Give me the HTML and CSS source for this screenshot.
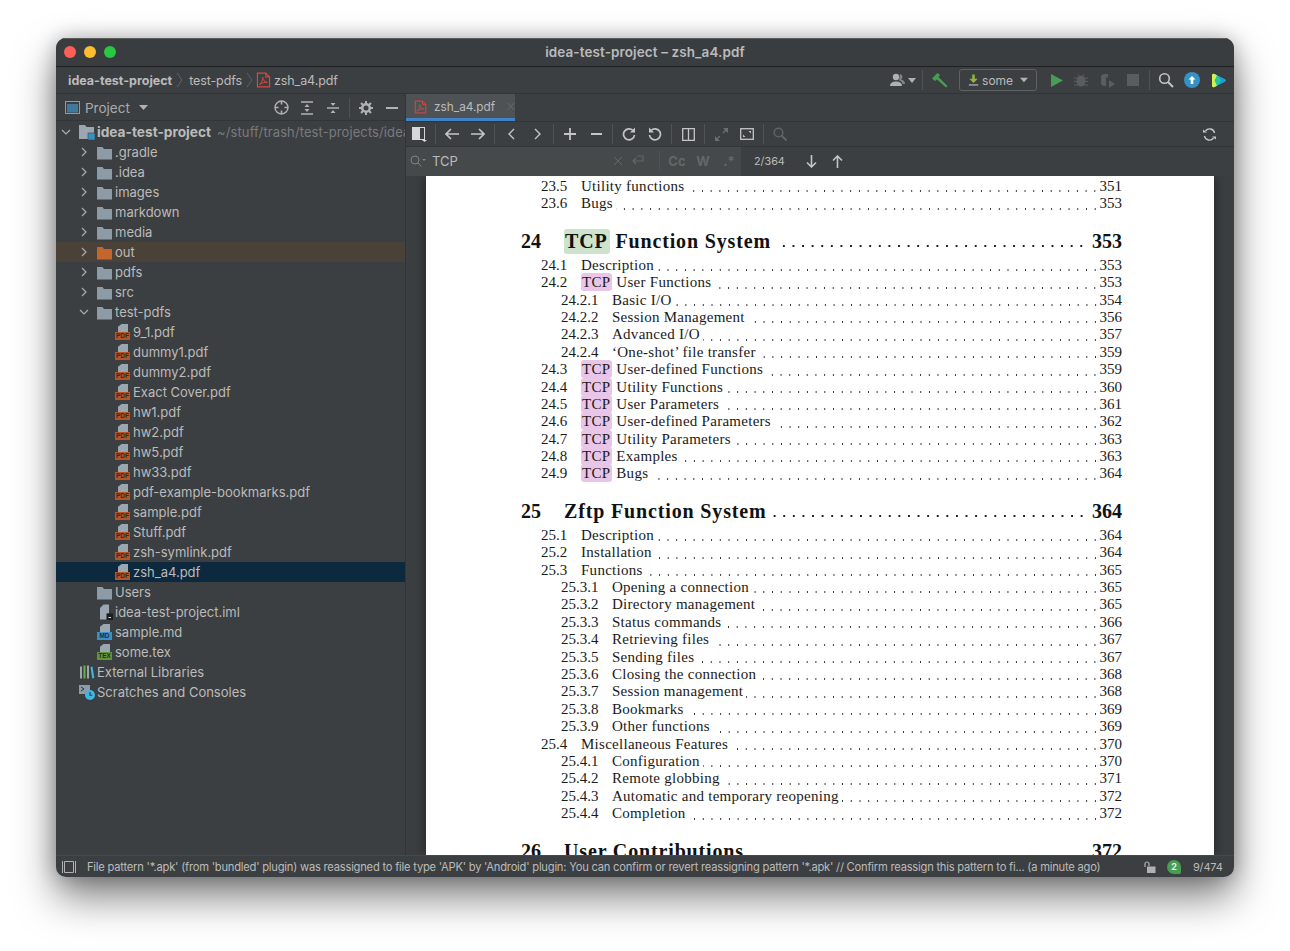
FILE: index.html
```html
<!DOCTYPE html>
<html lang="en">
<head>
<meta charset="utf-8">
<title>idea-test-project – zsh_a4.pdf</title>
<link rel="stylesheet" href="styles.css">
</head>
<body>
<svg class="defs" width="0" height="0" aria-hidden="true">
  <symbol id="folder" viewBox="0 0 15 15"><path d="M0 2h5.500L7 4h8v10.500H0z" fill="#8c9ba6"/></symbol>
  <symbol id="folder-out" viewBox="0 0 15 15"><path d="M0 2h5.500L7 4h8v10.500H0z" fill="#c2662e"/></symbol>
  <symbol id="arrow-r" viewBox="0 0 10 10"><path d="M3 1l4 4-4 4" fill="none" stroke="#a9adb0" stroke-width="1.2"/></symbol>
  <symbol id="arrow-d" viewBox="0 0 10 10"><path d="M1 3l4 4 4-4" fill="none" stroke="#a9adb0" stroke-width="1.2"/></symbol>
  <symbol id="pdf-red" viewBox="0 0 16 16"><path d="M1.5.7h9l4 4v10.600h-13zM10.500.7v4h4" fill="none" stroke="#d9493f" stroke-width="1.2"/><path d="M3.500 13c2-1 4-5 3.500-8 .3 3 2 5 5 5.500-3-.3-6 .5-8.500 2.500z" fill="none" stroke="#d9493f" stroke-width="1"/></symbol>
  <symbol id="file-iml" viewBox="0 0 16 16"><path d="M6.500.5H12v9h-2v6H3V4z" fill="#9aa7b0"/><rect x="9.500" y="9.500" width="6.500" height="6.500" fill="#1e1e1e"/><rect x="11.500" y="13" width="2.500" height="1" fill="#ddd"/></symbol>
  <symbol id="libs" viewBox="0 0 16 16"><rect x="1" y="2.500" width="2" height="12" fill="#9aa7b0"/><rect x="4.500" y="1.500" width="2" height="13" fill="#62b543"/><rect x="8" y="1.500" width="2" height="13" fill="#9aa7b0"/><path d="M11.500 3l2-.5 1.800 11.500-2 .5z" fill="#40b6e0"/></symbol>
  <symbol id="scratch" viewBox="0 0 16 16"><rect x="0" y="1" width="11" height="9" fill="#8c9ba6"/><path d="M2 3l3 2-3 2" fill="none" stroke="#333" stroke-width="1"/><circle cx="11" cy="11" r="5" fill="#40b6e0"/><path d="M11 8v3.300h2.300" fill="none" stroke="#2a3a44" stroke-width="1.100"/></symbol>
  <symbol id="module" viewBox="0 0 16 16"><path d="M0 1h6l1.500 2H15v12H0z" fill="#9aa7b0"/><rect x="9" y="9" width="7" height="7" fill="#3592c4" stroke="#3c3f41" stroke-width=".6"/></symbol>
</svg>

<div class="window">
  <header class="titlebar">
    <div class="lights"><i class="light red"></i><i class="light yellow"></i><i class="light green"></i></div>
    <span class="title">idea-test-project – zsh_a4.pdf</span>
  </header>

  <nav class="navbar">
    <span class="crumb strong">idea-test-project</span>
    <svg class="chev" width="7" height="18" viewBox="0 0 7 18"><path d="M1 2l5 7-5 7" fill="none" stroke="#5f6366"/></svg>
    <span class="crumb">test-pdfs</span>
    <svg class="chev" width="7" height="18" viewBox="0 0 7 18"><path d="M1 2l5 7-5 7" fill="none" stroke="#5f6366"/></svg>
    <svg class="crumb-icon" width="15" height="16"><use href="#pdf-red"/></svg>
    <span class="crumb">zsh_a4.pdf</span>

    <div class="nav-tools">
      <span class="btn person">
        <svg width="16" height="14" viewBox="0 0 16 14"><circle cx="6" cy="4" r="3.200" fill="#afb1b3"/><path d="M0 13c0-3 2-4.500 6-4.500s6 1.500 6 4.500z" fill="#afb1b3"/><path d="M10 1a3 3 0 0 1 1 5.500c2.500.5 4 2 4 4.500h-2.500C12 9 11 8 9 7.500z" fill="#7f8386"/></svg>
        <svg width="8" height="5" viewBox="0 0 8 5"><path d="M0 0h8L4 5z" fill="#afb1b3"/></svg>
      </span>
      <i class="sep"></i>
      <span class="btn hammer">
        <svg width="16" height="15" viewBox="0 0 16 15"><path d="M0 5.500L5.500 0l2.500 2-1.500 2L15.500 13 14 14.500 5 6.500 3 8z" fill="#499c54"/></svg>
      </span>
      <span class="run-config">
        <svg width="14" height="15" viewBox="0 0 13 14"><path d="M5 0h3v5h3.500L6.500 10 1.500 5H5z" fill="#8fb83a"/><rect x="1" y="11.500" width="11" height="1.500" fill="#afb1b3"/></svg>
        <span>some</span>
        <svg width="10" height="6" viewBox="0 0 9 5"><path d="M0 0h9L4.500 5z" fill="#afb1b3"/></svg>
      </span>
      <span class="btn play"><svg width="12" height="13" viewBox="0 0 12 13"><path d="M0 0l12 6.500L0 13z" fill="#499c54"/></svg></span>
      <span class="btn"><svg width="14" height="14" viewBox="0 0 14 14"><ellipse cx="7" cy="8" rx="4.500" ry="5.500" fill="#5a5d5f"/><path d="M0 5h14M0 8.500h14M0 12h14M3.500 1l2 2M10.500 1l-2 2" stroke="#5a5d5f"/></svg></span>
      <span class="btn"><svg width="15" height="15" viewBox="0 0 15 15"><path d="M7 1H4a3.500 3.500 0 0 0-3 3.500v5A3.500 3.500 0 0 0 4 13h2V4.500h2V1z" fill="#5a5d5f"/><path d="M9 7l6 4-6 4z" fill="#5a5d5f"/></svg></span>
      <span class="btn"><svg width="12" height="12"><rect width="12" height="12" fill="#5a5d5f"/></svg></span>
      <i class="sep"></i>
      <span class="btn"><svg width="16" height="16" viewBox="0 0 16 16"><circle cx="6.500" cy="6.500" r="4.800" fill="none" stroke="#c3c5c7" stroke-width="1.600"/><path d="M10 10l5 5" stroke="#c3c5c7" stroke-width="2"/></svg></span>
      <span class="btn"><svg width="16" height="16" viewBox="0 0 16 16"><circle cx="8" cy="8" r="8" fill="#3592c4"/><path d="M8 4l3.500 3.500H9.300V12H6.700V7.500H4.500z" fill="#fff"/></svg></span>
      <span class="btn"><svg width="15" height="15" viewBox="0 0 15 15"><path d="M1 2.500Q1 0 3.500 1L14 6.500q1.200 1 0 2L3.500 14Q1 15 1 12.500z" fill="#1fc8a0"/><path d="M1 2.500Q1 0 3.500 1L6 2.300 3.500 7.500 6 12.700 3.500 14Q1 15 1 12.500z" fill="#d8ee55"/><path d="M7 3l7 3.500q1.200 1 0 2L7 12 10 7.500z" fill="#1a9ee8"/></svg></span>
    </div>
  </nav>

  <div class="workspace">
    <aside class="sidebar">
      <div class="panel-head">
        <svg class="project-icon" width="15" height="13" viewBox="0 0 15 13"><rect x=".5" y=".5" width="14" height="12" fill="none" stroke="#8c9ba6"/><rect x="2" y="3" width="11" height="8.500" fill="#3d7a9e"/></svg>
        <span class="panel-title">Project</span>
        <svg class="caret" width="9" height="5" viewBox="0 0 9 5"><path d="M0 0h9L4.500 5z" fill="#afb1b3"/></svg>
        <div class="panel-tools">
          <span class="btn"><svg width="15" height="15" viewBox="0 0 15 15"><circle cx="7.500" cy="7.500" r="6.500" fill="none" stroke="#afb1b3" stroke-width="1.400"/><path d="M7.500 1v3.500M7.500 10.500V14M1 7.500h3.500M10.500 7.500H14" stroke="#afb1b3" stroke-width="1.600"/></svg></span>
          <span class="btn"><svg width="14" height="14" viewBox="0 0 14 14"><path d="M1 1h12M1 13h12" stroke="#afb1b3" stroke-width="1.400"/><path d="M7 3l2.500 3h-5zM7 11L4.500 8h5z" fill="#afb1b3"/></svg></span>
          <span class="btn"><svg width="14" height="14" viewBox="0 0 14 14"><path d="M1 7h12" stroke="#afb1b3" stroke-width="1.400"/><path d="M7 5L4.500 2h5zM7 9l2.500 3h-5z" fill="#afb1b3"/></svg></span>
          <i class="sep"></i>
          <span class="btn"><svg width="14" height="14" viewBox="0 0 14 14"><circle cx="7" cy="7" r="3.800" fill="none" stroke="#afb1b3" stroke-width="2.600"/><path d="M7 0v3M7 11v3M0 7h3M11 7h3M2 2l2 2M10 10l2 2M2 12l2-2M10 4l2-2" stroke="#afb1b3" stroke-width="2"/></svg></span>
          <span class="btn"><svg width="12" height="2"><rect width="12" height="2" fill="#afb1b3"/></svg></span>
        </div>
      </div>

      <ul class="tree">
        <li class="row d0"><svg class="arrow" width="10" height="10"><use href="#arrow-d"/></svg><svg class="ico" width="16" height="16"><use href="#module"/></svg><b>idea-test-project</b><span class="path">~/stuff/trash/test-projects/idea-test-project</span></li>
        <li class="row d1"><svg class="arrow" width="10" height="10"><use href="#arrow-r"/></svg><svg class="ico fold" width="15" height="15"><use href="#folder"/></svg>.gradle</li>
        <li class="row d1"><svg class="arrow" width="10" height="10"><use href="#arrow-r"/></svg><svg class="ico fold" width="15" height="15"><use href="#folder"/></svg>.idea</li>
        <li class="row d1"><svg class="arrow" width="10" height="10"><use href="#arrow-r"/></svg><svg class="ico fold" width="15" height="15"><use href="#folder"/></svg>images</li>
        <li class="row d1"><svg class="arrow" width="10" height="10"><use href="#arrow-r"/></svg><svg class="ico fold" width="15" height="15"><use href="#folder"/></svg>markdown</li>
        <li class="row d1"><svg class="arrow" width="10" height="10"><use href="#arrow-r"/></svg><svg class="ico fold" width="15" height="15"><use href="#folder"/></svg>media</li>
        <li class="row d1 excluded"><svg class="arrow" width="10" height="10"><use href="#arrow-r"/></svg><svg class="ico fold" width="15" height="15"><use href="#folder-out"/></svg>out</li>
        <li class="row d1"><svg class="arrow" width="10" height="10"><use href="#arrow-r"/></svg><svg class="ico fold" width="15" height="15"><use href="#folder"/></svg>pdfs</li>
        <li class="row d1"><svg class="arrow" width="10" height="10"><use href="#arrow-r"/></svg><svg class="ico fold" width="15" height="15"><use href="#folder"/></svg>src</li>
        <li class="row d1"><svg class="arrow" width="10" height="10"><use href="#arrow-d"/></svg><svg class="ico fold" width="15" height="15"><use href="#folder"/></svg>test-pdfs</li>
        <li class="row d2"><i class="noarrow"></i><span class="fi pdf"><i>PDF</i></span>9_1.pdf</li>
        <li class="row d2"><i class="noarrow"></i><span class="fi pdf"><i>PDF</i></span>dummy1.pdf</li>
        <li class="row d2"><i class="noarrow"></i><span class="fi pdf"><i>PDF</i></span>dummy2.pdf</li>
        <li class="row d2"><i class="noarrow"></i><span class="fi pdf"><i>PDF</i></span>Exact Cover.pdf</li>
        <li class="row d2"><i class="noarrow"></i><span class="fi pdf"><i>PDF</i></span>hw1.pdf</li>
        <li class="row d2"><i class="noarrow"></i><span class="fi pdf"><i>PDF</i></span>hw2.pdf</li>
        <li class="row d2"><i class="noarrow"></i><span class="fi pdf"><i>PDF</i></span>hw5.pdf</li>
        <li class="row d2"><i class="noarrow"></i><span class="fi pdf"><i>PDF</i></span>hw33.pdf</li>
        <li class="row d2"><i class="noarrow"></i><span class="fi pdf"><i>PDF</i></span>pdf-example-bookmarks.pdf</li>
        <li class="row d2"><i class="noarrow"></i><span class="fi pdf"><i>PDF</i></span>sample.pdf</li>
        <li class="row d2"><i class="noarrow"></i><span class="fi pdf"><i>PDF</i></span>Stuff.pdf</li>
        <li class="row d2"><i class="noarrow"></i><span class="fi pdf"><i>PDF</i></span>zsh-symlink.pdf</li>
        <li class="row d2 selected"><i class="noarrow"></i><span class="fi pdf"><i>PDF</i></span>zsh_a4.pdf</li>
        <li class="row d1"><i class="noarrow"></i><svg class="ico fold" width="15" height="15"><use href="#folder"/></svg>Users</li>
        <li class="row d1"><i class="noarrow"></i><svg class="ico" width="16" height="16"><use href="#file-iml"/></svg>idea-test-project.iml</li>
        <li class="row d1"><i class="noarrow"></i><span class="fi md"><i>MD</i></span>sample.md</li>
        <li class="row d1"><i class="noarrow"></i><span class="fi tex"><i>TEX</i></span>some.tex</li>
        <li class="row d0"><i class="noarrow"></i><svg class="ico" width="16" height="16"><use href="#libs"/></svg>External Libraries</li>
        <li class="row d0"><i class="noarrow"></i><svg class="ico" width="16" height="16"><use href="#scratch"/></svg>Scratches and Consoles</li>
      </ul>
    </aside>

    <main class="editor">
      <div class="tabs">
        <div class="tab">
          <svg width="15" height="16"><use href="#pdf-red"/></svg>
          <span>zsh_a4.pdf</span>
          <svg class="tab-close" width="9" height="9" viewBox="0 0 9 9"><path d="M.5.500l8 8M8.500.500l-8 8" stroke="#6b6f72"/></svg>
        </div>
      </div>

      <div class="pdf-tools">
        <span class="btn"><svg width="15" height="15" viewBox="0 0 15 15"><rect x=".5" y=".5" width="12" height="12" fill="none" stroke="#d5d7d9"/><rect x="1" y="1" width="7" height="11" fill="#d5d7d9"/><path d="M10 13h5l-2.500 2z" fill="#d5d7d9"/></svg></span>
        <i class="sep"></i>
        <span class="btn"><svg width="14" height="12" viewBox="0 0 14 12"><path d="M6 1L1 6l5 5M1 6h13" fill="none" stroke="#c3c5c7" stroke-width="1.600"/></svg></span>
        <span class="btn"><svg width="14" height="12" viewBox="0 0 14 12"><path d="M8 1l5 5-5 5M13 6H0" fill="none" stroke="#c3c5c7" stroke-width="1.600"/></svg></span>
        <i class="sep"></i>
        <span class="btn"><svg width="7" height="12" viewBox="0 0 7 12"><path d="M6 1L1 6l5 5" fill="none" stroke="#c3c5c7" stroke-width="1.400"/></svg></span>
        <span class="btn"><svg width="7" height="12" viewBox="0 0 7 12"><path d="M1 1l5 5-5 5" fill="none" stroke="#c3c5c7" stroke-width="1.400"/></svg></span>
        <i class="sep"></i>
        <span class="btn"><svg width="12" height="12" viewBox="0 0 12 12"><path d="M6 0v12M0 6h12" stroke="#c3c5c7" stroke-width="1.800"/></svg></span>
        <span class="btn"><svg width="11" height="2"><rect width="11" height="2" fill="#c3c5c7"/></svg></span>
        <i class="sep"></i>
        <span class="btn"><svg width="14" height="14" viewBox="0 0 14 14"><path d="M11 3.500A5.500 5.500 0 1 0 12.500 8" fill="none" stroke="#c3c5c7" stroke-width="1.700"/><path d="M13 .5v5H8z" fill="#c3c5c7"/></svg></span>
        <span class="btn"><svg width="14" height="14" viewBox="0 0 14 14"><path d="M3 3.500A5.500 5.500 0 1 1 1.500 8" fill="none" stroke="#c3c5c7" stroke-width="1.700"/><path d="M1 .5v5h5z" fill="#c3c5c7"/></svg></span>
        <i class="sep"></i>
        <span class="btn"><svg width="13" height="13" viewBox="0 0 13 13"><path d="M.7.700h11.600v11.600H.7zM6.500.700v11.600" fill="none" stroke="#c3c5c7" stroke-width="1.300"/></svg></span>
        <i class="sep"></i>
        <span class="btn"><svg width="13" height="13" viewBox="0 0 13 13"><path d="M1 12l4-4M12 1L8 5" stroke="#6b6f72" stroke-width="1.300"/><path d="M0 8v5h5zM13 5V0H8z" fill="#6b6f72"/></svg></span>
        <span class="btn"><svg width="14" height="12" viewBox="0 0 14 12"><rect x=".7" y=".7" width="12.600" height="10.600" fill="none" stroke="#c3c5c7" stroke-width="1.300"/><path d="M3 9V6.500L5.500 9zM11 3v2.500L8.500 3z" fill="#c3c5c7"/></svg></span>
        <i class="sep"></i>
        <span class="btn"><svg width="14" height="14" viewBox="0 0 14 14"><circle cx="5.500" cy="5.500" r="4.300" fill="none" stroke="#5f6366" stroke-width="1.500"/><path d="M8.500 8.500L13.500 13.500" stroke="#5f6366" stroke-width="2"/></svg></span>
        <span class="btn reload"><svg width="13" height="13" viewBox="0 0 13 13"><path d="M11.500 5A5 5 0 0 0 2.500 3M1.500 8a5 5 0 0 0 9 2" fill="none" stroke="#c3c5c7" stroke-width="1.400"/><path d="M0 1.500L4 4.500H0zM13 11.500L9 8.500h4z" fill="#c3c5c7"/></svg></span>
      </div>

      <div class="find">
        <div class="find-field">
          <svg class="find-glass" width="16" height="12" viewBox="0 0 16 12"><circle cx="5" cy="5" r="4" fill="none" stroke="#7f8386"/><path d="M8 8l3.500 3.500" stroke="#7f8386"/><path d="M12 4h4l-2 2z" fill="#7f8386"/></svg>
          <span class="find-query">TCP</span>
          <svg class="find-x" width="8" height="8" viewBox="0 0 8 8"><path d="M0 0l8 8M8 0L0 8" stroke="#63676a"/></svg>
          <svg class="find-wrap" width="13" height="11" viewBox="0 0 13 11"><path d="M6 1h6v5H2M5 3L2 6l3 3" fill="none" stroke="#63676a" stroke-width="1.200"/></svg>
          <i class="sep"></i>
          <span class="find-opt">Cc</span>
          <span class="find-opt">W</span>
          <span class="find-opt">.*</span>
        </div>
        <span class="find-count">2/364</span>
        <span class="btn"><svg width="11" height="13" viewBox="0 0 11 13"><path d="M5.500 0v12M1 7.500l4.500 4.500L10 7.500" fill="none" stroke="#c3c5c7" stroke-width="1.600"/></svg></span>
        <span class="btn"><svg width="11" height="13" viewBox="0 0 11 13"><path d="M5.500 13V1M1 5.500L5.500 1 10 5.500" fill="none" stroke="#c3c5c7" stroke-width="1.600"/></svg></span>
      </div>

      <div class="viewer">
        <article class="page">
          <p class="sec"><span class="n">23.5</span><span class="t">Utility functions</span><i class="dots"></i><span class="p">351</span></p>
          <p class="sec"><span class="n">23.6</span><span class="t">Bugs</span><i class="dots"></i><span class="p">353</span></p>

          <h2 class="chap"><span class="n">24</span><span class="t"><mark class="hit-cur">TCP</mark> Function System</span><i class="dots"></i><span class="p">353</span></h2>
          <p class="sec"><span class="n">24.1</span><span class="t">Description</span><i class="dots"></i><span class="p">353</span></p>
          <p class="sec"><span class="n">24.2</span><span class="t"><mark>TCP</mark> User Functions</span><i class="dots"></i><span class="p">353</span></p>
          <p class="sub"><span class="n">24.2.1</span><span class="t">Basic I/O</span><i class="dots"></i><span class="p">354</span></p>
          <p class="sub"><span class="n">24.2.2</span><span class="t">Session Management</span><i class="dots"></i><span class="p">356</span></p>
          <p class="sub"><span class="n">24.2.3</span><span class="t">Advanced I/O</span><i class="dots"></i><span class="p">357</span></p>
          <p class="sub"><span class="n">24.2.4</span><span class="t">‘One-shot’ file transfer</span><i class="dots"></i><span class="p">359</span></p>
          <p class="sec"><span class="n">24.3</span><span class="t"><mark>TCP</mark> User-defined Functions</span><i class="dots"></i><span class="p">359</span></p>
          <p class="sec"><span class="n">24.4</span><span class="t"><mark>TCP</mark> Utility Functions</span><i class="dots"></i><span class="p">360</span></p>
          <p class="sec"><span class="n">24.5</span><span class="t"><mark>TCP</mark> User Parameters</span><i class="dots"></i><span class="p">361</span></p>
          <p class="sec"><span class="n">24.6</span><span class="t"><mark>TCP</mark> User-defined Parameters</span><i class="dots"></i><span class="p">362</span></p>
          <p class="sec"><span class="n">24.7</span><span class="t"><mark>TCP</mark> Utility Parameters</span><i class="dots"></i><span class="p">363</span></p>
          <p class="sec"><span class="n">24.8</span><span class="t"><mark>TCP</mark> Examples</span><i class="dots"></i><span class="p">363</span></p>
          <p class="sec"><span class="n">24.9</span><span class="t"><mark>TCP</mark> Bugs</span><i class="dots"></i><span class="p">364</span></p>

          <h2 class="chap"><span class="n">25</span><span class="t">Zftp Function System</span><i class="dots"></i><span class="p">364</span></h2>
          <p class="sec"><span class="n">25.1</span><span class="t">Description</span><i class="dots"></i><span class="p">364</span></p>
          <p class="sec"><span class="n">25.2</span><span class="t">Installation</span><i class="dots"></i><span class="p">364</span></p>
          <p class="sec"><span class="n">25.3</span><span class="t">Functions</span><i class="dots"></i><span class="p">365</span></p>
          <p class="sub"><span class="n">25.3.1</span><span class="t">Opening a connection</span><i class="dots"></i><span class="p">365</span></p>
          <p class="sub"><span class="n">25.3.2</span><span class="t">Directory management</span><i class="dots"></i><span class="p">365</span></p>
          <p class="sub"><span class="n">25.3.3</span><span class="t">Status commands</span><i class="dots"></i><span class="p">366</span></p>
          <p class="sub"><span class="n">25.3.4</span><span class="t">Retrieving files</span><i class="dots"></i><span class="p">367</span></p>
          <p class="sub"><span class="n">25.3.5</span><span class="t">Sending files</span><i class="dots"></i><span class="p">367</span></p>
          <p class="sub"><span class="n">25.3.6</span><span class="t">Closing the connection</span><i class="dots"></i><span class="p">368</span></p>
          <p class="sub"><span class="n">25.3.7</span><span class="t">Session management</span><i class="dots"></i><span class="p">368</span></p>
          <p class="sub"><span class="n">25.3.8</span><span class="t">Bookmarks</span><i class="dots"></i><span class="p">369</span></p>
          <p class="sub"><span class="n">25.3.9</span><span class="t">Other functions</span><i class="dots"></i><span class="p">369</span></p>
          <p class="sec"><span class="n">25.4</span><span class="t">Miscellaneous Features</span><i class="dots"></i><span class="p">370</span></p>
          <p class="sub"><span class="n">25.4.1</span><span class="t">Configuration</span><i class="dots"></i><span class="p">370</span></p>
          <p class="sub"><span class="n">25.4.2</span><span class="t">Remote globbing</span><i class="dots"></i><span class="p">371</span></p>
          <p class="sub"><span class="n">25.4.3</span><span class="t">Automatic and temporary reopening</span><i class="dots"></i><span class="p">372</span></p>
          <p class="sub"><span class="n">25.4.4</span><span class="t">Completion</span><i class="dots"></i><span class="p">372</span></p>

          <h2 class="chap"><span class="n">26</span><span class="t">User Contributions</span><i class="nodots"></i><span class="p">372</span></h2>
        </article>
      </div>
    </main>
  </div>

  <footer class="status">
    <svg class="status-toggle" width="14" height="12" viewBox="0 0 14 12"><path d="M.5 0v12M13.500 0v12M2.500.5h9v11h-9z" fill="none" stroke="#afb1b3"/></svg>
    <span class="status-msg">File pattern '*.apk' (from 'bundled' plugin) was reassigned to file type 'APK' by 'Android' plugin: You can confirm or revert reassigning pattern '*.apk' // Confirm reassign this pattern to fi... (a minute ago)</span>
    <svg class="status-lock" width="12" height="12" viewBox="0 0 12 12"><path d="M1 6V3a2 2 0 0 1 4 0v2" fill="none" stroke="#afb1b3" stroke-width="1.200"/><rect x="3" y="5.500" width="8.500" height="6.500" fill="#afb1b3"/></svg>
    <span class="status-badge">2</span>
    <span class="status-pos">9/474</span>
  </footer>
</div>
</body>
</html>
```
FILE: styles.css
```css
* { box-sizing: border-box; }

html, body { margin: 0; height: 100%; }

body {
  background: #fff;
  overflow: hidden;
  font-family: Inter, "Liberation Sans", sans-serif;
  font-size: 13px;
  color: #bbbbbb;
}

.defs { position: absolute; }

ul { list-style: none; margin: 0; padding: 0; }
p, h2 { margin: 0; }

.window {
  display: flex;
  flex-direction: column;
  width: 1178px;
  height: 839px;
  margin: 38px 0 0 56px;
  border-radius: 10px;
  overflow: hidden;
  background: #3c3f41;
  box-shadow: 0 20px 40px rgba(0, 0, 0, .5), 0 0 20px rgba(0, 0, 0, .25);
}

.titlebar {
  flex: none;
  height: 29px;
  display: flex;
  align-items: center;
  justify-content: center;
  position: relative;
  padding-bottom: 2px;
  background: #3a3d3f;
  border-top: 1px solid #5a5c5e;
  border-bottom: 1px solid #1f2123;
}

.lights {
  position: absolute;
  left: 8px;
  top: 7px;
  display: flex;
  gap: 8px;
}

.light { width: 12px; height: 12px; border-radius: 50%; }
.red { background: #ff5f57; }
.yellow { background: #febc2e; }
.green { background: #28c840; }

.title { font-size: 13.500px; font-weight: 600; color: #b9bbbd; letter-spacing: .1px; }

.btn {
  flex: none;
  width: 26px;
  display: flex;
  align-items: center;
  justify-content: center;
}

.sep {
  flex: none;
  width: 1px;
  height: 20px;
  margin: 0 3px;
  background: #505355;
}

.navbar {
  flex: none;
  height: 27px;
  display: flex;
  align-items: center;
  padding: 0 3px 0 12px;
  border-bottom: 1px solid #323537;
}

.crumb { font-size: 12.500px; letter-spacing: -.1px; }
.crumb.strong { font-weight: 700; letter-spacing: 0; }
.chev { margin: 0 6px 0 4px; }
.crumb-icon { margin: 0 3px 0 -3px; }

.nav-tools {
  margin-left: auto;
  display: flex;
  align-items: center;
}

.person { width: 32px; gap: 2px; }
.hammer { margin: 0 5px 0 1px; }
.play { padding-left: 3px; }

.run-config {
  width: 78px;
  height: 22px;
  margin-right: 5px;
  margin-left: 1px;
  display: flex;
  align-items: center;
  gap: 3px;
  padding: 0 8px;
  border: 1px solid #5e6264;
  border-radius: 3px;
  font-size: 12px;
}
.run-config svg:last-child { margin-left: 4px; }

.workspace {
  flex: 1;
  min-height: 0;
  display: flex;
}

.sidebar {
  flex: none;
  width: 350px;
  overflow: hidden;
  border-right: 1px solid #323537;
}

.panel-head {
  height: 27px;
  display: flex;
  align-items: center;
  padding: 1px 0 0 9px;
  border-bottom: 1px solid #323537;
}
.panel-title { margin-left: 5px; font-size: 13.500px; color: #a9abad; }
.caret { margin-left: 9px; }
.panel-tools { margin-left: auto; display: flex; align-items: center; }

.tree { padding-top: 1px; }

.row {
  height: 20px;
  display: flex;
  align-items: center;
  white-space: nowrap;
  font-size: 13px;
}
.row.d0 { padding-left: 5px; }
.row.d1 { padding-left: 23px; }
.row.d2 { padding-left: 41px; }

.arrow { flex: none; width: 10px; margin-right: 8px; }
.noarrow { flex: none; width: 18px; }
.ico { flex: none; margin-right: 2px; }
.ico.fold { margin-right: 3px; }

/* small file-type icon: grey sheet over a coloured label */
.fi {
  flex: none;
  position: relative;
  width: 16px;
  height: 16px;
  margin-right: 2px;
}
.fi::before {
  content: "";
  position: absolute;
  left: 3px;
  top: 0;
  width: 10px;
  height: 8px;
  background: #9aa7b0;
  clip-path: polygon(35% 0, 100% 0, 100% 100%, 0 100%, 0 35%);
}
.fi i {
  position: absolute;
  left: 0;
  right: 1px;
  bottom: 0;
  height: 8px;
  font: 700 6.500px/8px "Liberation Sans", sans-serif;
  text-align: center;
  color: #2b2b2b;
}
.pdf i { background: #b5562a; }
.md i { background: #3592c4; }
.tex i { background: #62953a; }

.row b { font-size: 13.700px; font-weight: 700; }
.path { margin-left: 6px; color: #787b7d; letter-spacing: .1px; }

.excluded { background: #4a4238; }
.selected { background: #0d293e; }

.editor {
  flex: 1;
  min-width: 0;
  display: flex;
  flex-direction: column;
}

.tabs {
  flex: none;
  height: 28px;
  display: flex;
  border-bottom: 1px solid #323537;
}

.tab {
  width: 109px;
  display: flex;
  align-items: center;
  gap: 7px;
  padding: 1px 0 0 8px;
  background: #4e5254;
  border-bottom: 3px solid #4083c9;
  font-size: 11.800px;
}
.tab-close { margin-left: 5px; }

.pdf-tools {
  flex: none;
  height: 25px;
  display: flex;
  align-items: center;
  border-bottom: 1px solid #323537;
}
.reload { margin-left: auto; margin-right: 12px; }

.find {
  flex: none;
  height: 29px;
  display: flex;
  align-items: center;
  padding-bottom: 1px;
}

.find-field {
  width: 335px;
  height: 29px;
  display: flex;
  align-items: center;
  padding: 0 0 1px 4px;
  background: #45494a;
}
.find-glass { margin-right: 6px; }
.find-query { flex: 1; font-size: 13px; }
.find-x { margin-right: 9px; }
.find-wrap { margin-right: 12px; }
.find-opt {
  width: 26px;
  padding-left: 2px;
  text-align: center;
  color: #63676a;
  font-weight: 700;
  font-size: 13px;
}
.find-count { flex: none; margin: 0 8px 0 13px; width: 36px; font-size: 10.800px; }

.viewer {
  flex: 1;
  min-height: 0;
  overflow: hidden;
  padding: 0 20px;
  background: #3c3f41;
}

.page {
  height: 100%;
  padding: 2px 92px 0 95px;
  overflow: hidden;
  background: #fff;
  color: #1a1a1a;
  font-family: "Liberation Serif", serif;
  font-size: 15px;
  box-shadow: 0 0 12px rgba(0, 0, 0, .5);
}

.sec, .sub {
  display: flex;
  height: 17.400px;
  line-height: 17.400px;
  white-space: nowrap;
}
.sec .n { width: 40px; margin-left: 20px; flex: none; }
.sub .n { width: 51px; margin-left: 40px; flex: none; }
.sec .t, .sub .t { letter-spacing: .27px; }

.dots {
  flex: 1;
  margin: 0 0 0 3px;
  background: radial-gradient(circle, #333 .7px, transparent 1.050px) right bottom 2px / 8.720px 4px repeat-x;
}

.chap {
  display: flex;
  height: 20px;
  margin: 18.500px 0 5.500px;
  line-height: 20px;
  font-size: 20px;
  font-weight: 700;
  color: #111;
  white-space: nowrap;
}
.chap .n { width: 43px; flex: none; }
.chap .t { letter-spacing: .85px; }
.chap .dots {
  margin: 0 6px 0 5px;
  background: radial-gradient(circle, #222 1px, transparent 1.300px) right bottom 3px / 9.600px 4px repeat-x;
}
.nodots { flex: 1; }

mark { background: #e9c6e7; color: inherit; padding: 1px 2px 1px 1px; border-radius: 3px; }
.hit-cur { background: #cfe2cc; padding: 1px 2px 2px 1px; }

.status {
  flex: none;
  height: 22px;
  display: flex;
  align-items: center;
  padding: 0 0 0 6px;
  font-size: 11.200px;
  border-top: 1px solid #46494b;
}
.status-toggle { flex: none; margin-right: 11px; }
.status-msg { flex: none; width: 1014px; white-space: nowrap; letter-spacing: -.23px; }
.status-lock { flex: none; margin-left: 43px; }
.status-badge {
  flex: none;
  width: 14px;
  height: 14px;
  margin-left: 11px;
  border-radius: 50% 50% 2px 50%;
  background: #499c54;
  color: #e8f3e8;
  font-size: 9px;
  font-weight: 700;
  line-height: 14px;
  text-align: center;
}
.status-pos { flex: none; margin-left: 12px; font-size: 11px; letter-spacing: -.2px; }
```
